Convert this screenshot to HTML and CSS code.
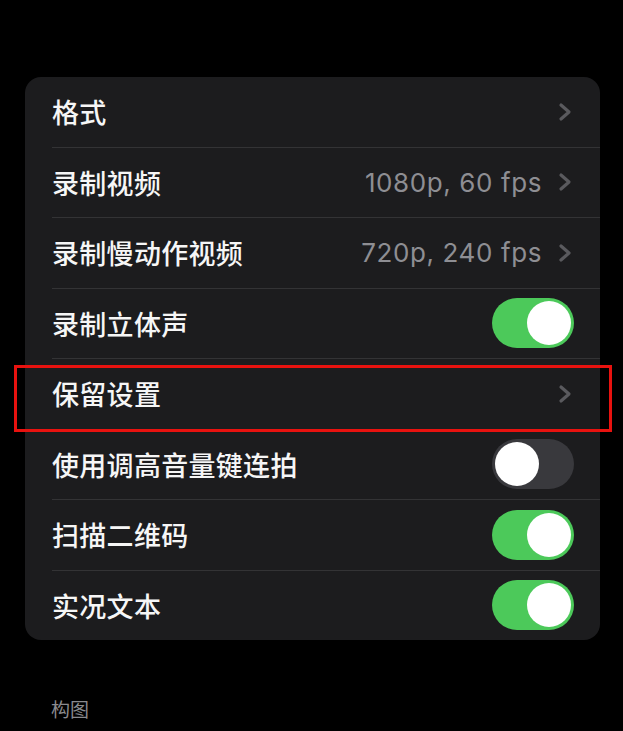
FILE: index.html
```html
<!DOCTYPE html>
<html lang="zh-CN">
<head>
  <meta charset="UTF-8">
  <meta name="viewport" content="width=device-width, initial-scale=1.0">
  <title>相机设置</title>
  <link rel="stylesheet" href="styles.css">
</head>
<body>
  <div class="page">
    <div class="group">
      <!-- highlight around 保留设置 -->
      <div class="highlight"></div>

      <div class="row">
        <div class="row-inner">
          <span class="label">格式</span>
          <span class="detail">
            <svg class="chevron" viewBox="0 0 14 20"><polyline points="3,3 11,10 3,17"/></svg>
          </span>
        </div>
      </div>
      <div class="row">
        <div class="row-inner">
          <span class="label">录制视频</span>
          <span class="detail">
            <span class="value">1080p, 60 fps</span>
            <svg class="chevron" viewBox="0 0 14 20"><polyline points="3,3 11,10 3,17"/></svg>
          </span>
        </div>
      </div>
      <div class="row">
        <div class="row-inner">
          <span class="label">录制慢动作视频</span>
          <span class="detail">
            <span class="value">720p, 240 fps</span>
            <svg class="chevron" viewBox="0 0 14 20"><polyline points="3,3 11,10 3,17"/></svg>
          </span>
        </div>
      </div>
      <div class="row">
        <div class="row-inner">
          <span class="label">录制立体声</span>
          <span class="switch on"><span class="knob"></span></span>
        </div>
      </div>
      <div class="row">
        <div class="row-inner">
          <span class="label">保留设置</span>
          <span class="detail">
            <svg class="chevron" viewBox="0 0 14 20"><polyline points="3,3 11,10 3,17"/></svg>
          </span>
        </div>
      </div>
      <div class="row">
        <div class="row-inner">
          <span class="label">使用调高音量键连拍</span>
          <span class="switch"><span class="knob"></span></span>
        </div>
      </div>
      <div class="row">
        <div class="row-inner">
          <span class="label">扫描二维码</span>
          <span class="switch on"><span class="knob"></span></span>
        </div>
      </div>
      <div class="row">
        <div class="row-inner">
          <span class="label">实况文本</span>
          <span class="switch on"><span class="knob"></span></span>
        </div>
      </div>
    </div>

    <div class="section-title">构图</div>
  </div>
</body>
</html>
```

FILE: styles.css
```css
html, body {
  margin: 0;
  padding: 0;
  background: #000;
}

body {
  font-family: "Noto Sans CJK SC", "Noto Sans", sans-serif;
  color: #fff;
  width: 623px;
  height: 731px;
  overflow: hidden;
}

.page {
  padding: 77px 23px 0 25px;
}

.group {
  position: relative;
  background: #1c1c1e;
  border-radius: 16px;
}

.row {
  padding-left: 27px;
}

.row-inner {
  display: flex;
  align-items: center;
  justify-content: space-between;
  height: 69.5px;
  padding-right: 26px;
  border-bottom: 1px solid #333335;
}

.row:last-child .row-inner {
  border-bottom: none;
}

.label {
  font-size: 27px;
  font-weight: 500;
  line-height: 1;
  letter-spacing: 0.3px;
  color: #f6f6f6;
}

.detail {
  display: flex;
  align-items: center;
  gap: 16px;
}

.value {
  font-family: Inter, "Liberation Sans", sans-serif;
  font-size: 26px;
  color: #8e8e93;
  letter-spacing: 0.6px;
}

.chevron {
  width: 14px;
  height: 20px;
  margin-right: 2px;
  fill: none;
  stroke: #5a5a5e;
  stroke-width: 3.2;
  stroke-linecap: round;
  stroke-linejoin: round;
}

.switch {
  display: flex;
  align-items: center;
  width: 82px;
  height: 50px;
  padding: 3px;
  box-sizing: border-box;
  border-radius: 25px;
  background: #39393d;
}

.switch.on {
  background: #4cc95a;
  justify-content: flex-end;
}

.knob {
  width: 44px;
  height: 44px;
  border-radius: 50%;
  background: #fff;
}

.highlight {
  position: absolute;
  top: 288px;
  left: -11px;
  width: 598px;
  height: 67px;
  box-sizing: border-box;
  border: 3px solid #e8120f;
}

.section-title {
  margin: 55px 0 0 26px;
  font-size: 19px;
  color: #8a8a8e;
}
```
